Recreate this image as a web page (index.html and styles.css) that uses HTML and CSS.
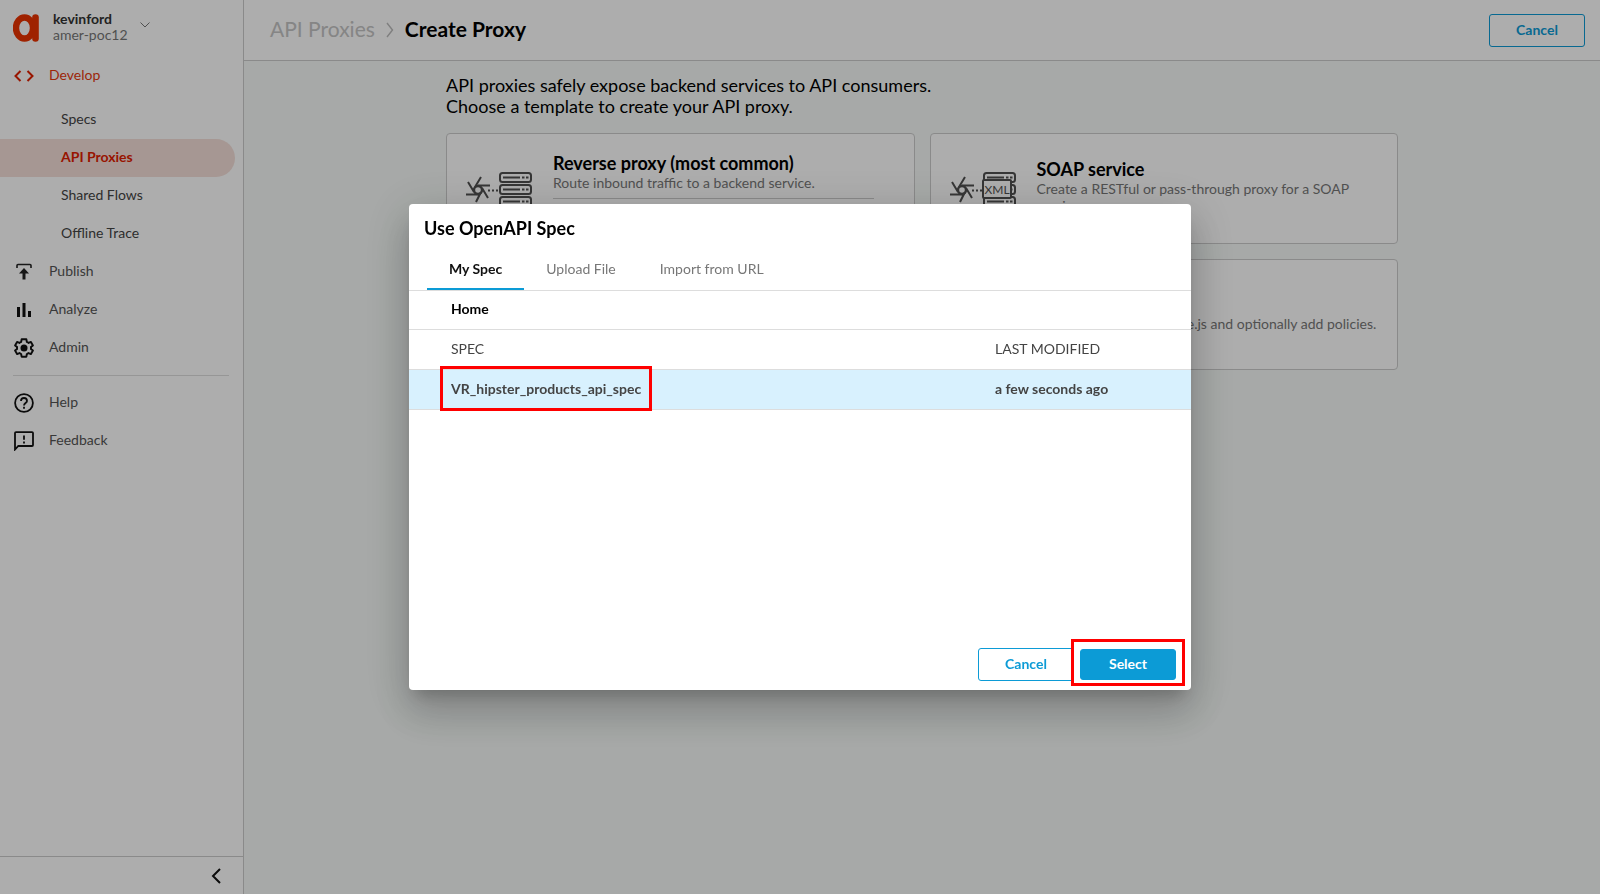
FILE: index.html
```html
<!DOCTYPE html>
<html lang="en">
<head>
<meta charset="utf-8">
<title>Create Proxy</title>
<link rel="stylesheet" href="styles.css">
</head>
<body>
<svg class="defs" aria-hidden="true">
  <defs>
    <g id="pinwheel" fill="none" stroke="#505050" stroke-width="2">
      <circle cx="12" cy="18" r="4" stroke-width="2.4"/>
      <path d="M9 15L15 5M12 13.500H24M16 16L22 26M15 20L10 30M13 22.500H0M8 20L2 10"/>
      <path d="M22 18.500H32" stroke-dasharray="2 2" stroke-dashoffset="0"/>
    </g>
    <g id="server">
      <rect x="34" y="1" width="31" height="9" rx="2.500" fill="none" stroke="#505050" stroke-width="2"/>
      <path d="M37 5.500H54M56 5.500H58.500M60 5.500H62.500" stroke="#505050" stroke-width="2"/>
    </g>
  </defs>
</svg>
<div class="app">
  <aside class="sidebar">
    <button class="account" type="button">
      <svg class="logo" width="26" height="28" viewBox="0 0 26 28" fill="none" stroke="#eb3300" aria-hidden="true">
        <ellipse cx="11.500" cy="14" rx="8.500" ry="10.500" stroke-width="6.400"/>
        <path d="M22.500 3.500V24.500" stroke-width="6.600" stroke-linecap="round"/>
      </svg>
      <span class="account-text"><strong>kevinford</strong><span>amer-poc12</span></span>
      <svg class="caret" width="10" height="6" viewBox="0 0 10 6" fill="none" stroke="#777" aria-hidden="true"><path d="M.500.500L5 5L9.500.500"/></svg>
    </button>
    <nav class="nav">
      <a class="item current" href="#"><svg width="20" height="20" viewBox="0 0 20 20" fill="none" stroke="#e02000" stroke-width="2" aria-hidden="true"><path d="M6.500 5L1.500 10L6.500 15M13.500 5L18.500 10L13.500 15"/></svg>Develop</a>
      <div class="sub">
        <a class="subitem" href="#">Specs</a>
        <a class="subitem active" href="#">API Proxies</a>
        <a class="subitem" href="#">Shared Flows</a>
        <a class="subitem" href="#">Offline Trace</a>
      </div>
      <a class="item" href="#"><svg width="20" height="20" viewBox="0 0 20 20" fill="none" stroke="#222" aria-hidden="true"><path d="M3 6V3.500Q3 2.500 4 2.500H16Q17 2.500 17 3.500V6" stroke-width="1.600"/><path d="M10 17.500V9" stroke-width="3"/><path d="M5 11.500L10 6L15 11.500Z" fill="#222" stroke="none"/></svg>Publish</a>
      <a class="item" href="#"><svg width="20" height="20" viewBox="0 0 20 20" fill="#111" aria-hidden="true"><path d="M3 7H6V17H3zM8.500 3H11.500V17H8.500zM14 11H17V17H14z"/></svg>Analyze</a>
      <a class="item" href="#"><svg width="20" height="20" viewBox="2.500 2 20 20" aria-hidden="true"><path fill="none" stroke="#111" stroke-width="1.900" stroke-linejoin="round" d="M19.430 12.980c.040-.320.070-.640.070-.980s-.030-.660-.070-.980l2-1.600-2-3.460-2.400 1c-.520-.400-1.080-.730-1.690-.980L14.900 3.300h-4.800l-.440 2.680c-.610.250-1.170.590-1.690.980l-2.400-1-2 3.460 2 1.600c-.040.320-.070.650-.070.980s.030.660.070.980l-2 1.600 2 3.460 2.400-1c.520.400 1.080.730 1.690.980l.440 2.660h4.800l.440-2.660c.610-.250 1.170-.590 1.690-.980l2.400 1 2-3.460z"/><circle cx="12.500" cy="12" r="3.500" fill="#111"/></svg>Admin</a>
      <hr class="rule">
      <a class="item" href="#"><svg width="20" height="20" viewBox="0 0 20 20" fill="none" stroke="#111" stroke-width="1.800" aria-hidden="true"><circle cx="10" cy="10" r="8.900"/><path d="M7 8C7 4 13 4 13 8C13 10 10 10.200 10 12.500M10 13.800V15.800"/></svg>Help</a>
      <a class="item" href="#"><svg width="20" height="20" viewBox="0 0 20 20" fill="none" stroke="#111" stroke-width="1.800" aria-hidden="true"><path d="M1 18.500V2Q1 1.200 2 1.200H18Q19 1.200 19 2V14Q19 15 18 15H4.300Z"/><path d="M10 4.500V8.800M10 10.500V12.500"/></svg>Feedback</a>
    </nav>
    <div class="collapse">
      <button type="button" aria-label="Collapse menu"><svg width="10" height="16" viewBox="0 0 10 16" fill="none" stroke="#111" stroke-width="2"><path d="M9 1L2 8L9 15"/></svg></button>
    </div>
  </aside>
  <div class="page">
    <header class="topbar">
      <a class="crumb" href="#">API Proxies</a>
      <svg class="sep" width="8" height="16" viewBox="0 0 8 16" fill="none" stroke="#bbb" stroke-width="1.400" aria-hidden="true"><path d="M1 1L6.500 8L1 15"/></svg>
      <h1>Create Proxy</h1>
      <button class="btn outline" type="button">Cancel</button>
    </header>
    <main class="content">
      <p class="intro">API proxies safely expose backend services to API consumers.<br>Choose a template to create your API proxy.</p>
      <div class="cards">
        <article class="card">
          <svg width="66" height="36" viewBox="0 0 66 36" aria-hidden="true"><use href="#pinwheel"/><use href="#server"/><use href="#server" y="12"/><use href="#server" y="24"/></svg>
          <div class="card-text">
            <h2>Reverse proxy (most common)</h2>
            <p>Route inbound traffic to a backend service.</p>
            <div class="card-action"><button class="link" type="button">Use OpenAPI</button></div>
          </div>
        </article>
        <article class="card">
          <svg width="66" height="36" viewBox="0 0 66 36" aria-hidden="true"><use href="#pinwheel"/><use href="#server"/><use href="#server" y="12"/><use href="#server" y="24"/><rect x="33" y="8" width="28" height="18" rx="1" fill="#fff" stroke="#505050" stroke-width="2"/><text class="glyph" x="47" y="22" text-anchor="middle">XML</text></svg>
          <div class="card-text">
            <h2>SOAP service</h2>
            <p>Create a RESTful or pass-through proxy for a SOAP service.</p>
          </div>
        </article>
        <article class="card">
          <svg width="66" height="36" viewBox="0 0 66 36" aria-hidden="true"><use href="#pinwheel"/></svg>
          <div class="card-text">
            <h2>No target</h2>
            <p>Create a simple proxy with no target.</p>
          </div>
        </article>
        <article class="card">
          <svg width="66" height="36" viewBox="0 0 66 36" aria-hidden="true"><use href="#pinwheel"/></svg>
          <div class="card-text">
            <h2>Hosted target</h2>
            <p>Proxy to the hosted Node.js and optionally add policies.</p>
          </div>
        </article>
      </div>
    </main>
  </div>
</div>

<div class="backdrop">
  <section class="dialog" role="dialog" aria-modal="true" aria-labelledby="dialog-title">
    <h2 id="dialog-title">Use OpenAPI Spec</h2>
    <div class="tabs" role="tablist">
      <button class="tab selected" type="button" role="tab" aria-selected="true">My Spec</button>
      <button class="tab" type="button" role="tab" aria-selected="false">Upload File</button>
      <button class="tab" type="button" role="tab" aria-selected="false">Import from URL</button>
    </div>
    <div class="path">Home</div>
    <div class="list">
      <table>
        <thead><tr><th scope="col">SPEC</th><th scope="col">LAST MODIFIED</th></tr></thead>
        <tbody><tr><td><span class="marked name">VR_hipster_products_api_spec</span></td><td>a few seconds ago</td></tr></tbody>
      </table>
    </div>
    <footer class="actions">
      <button class="btn outline" type="button">Cancel</button>
      <span class="marked select"><button class="btn solid" type="button">Select</button></span>
    </footer>
  </section>
</div>
</body>
</html>
```

FILE: styles.css
```css
* { box-sizing: border-box; }
body {
  margin: 0;
  font-family: Lato, "Open Sans", sans-serif;
  font-size: 14px;
  color: #000;
}
button { font: inherit; cursor: pointer; }
a { text-decoration: none; color: inherit; }
h1, h2, p { margin: 0; }
.defs { position: absolute; width: 0; height: 0; }

.app { display: flex; min-height: 100vh; background: #f6faf8; }

/* Sidebar */
.sidebar {
  display: flex;
  flex-direction: column;
  flex: 0 0 244px;
  background: #fff;
  border-right: 1px solid #ccc;
}
.account {
  display: flex;
  align-items: center;
  height: 57px;
  padding: 0 13px 3px;
  border: 0;
  background: none;
  text-align: left;
}
.logo { margin-top: 2px; }
.account-text {
  display: flex;
  flex-direction: column;
  margin: 0 12px 0 14px;
  line-height: 16px;
  color: #777;
}
.account-text strong { color: #333; }
.caret { margin-bottom: 4px; }
.nav { display: flex; flex-direction: column; flex: 1; }
.item {
  display: flex;
  align-items: center;
  gap: 15px;
  height: 38px;
  padding: 0 0 4px 14px;
  color: #555;
}
.item svg { margin-top: 4px; }
.item.current { color: #e8380d; }
.sub { margin-top: 6px; }
.subitem {
  display: flex;
  align-items: center;
  height: 38px;
  margin-right: 8px;
  padding: 0 0 4px 61px;
  color: #444;
}
.subitem.active {
  border-radius: 0 19px 19px 0;
  background: #f5dfd9;
  color: #e02000;
  font-weight: 700;
}
.rule {
  width: 216px;
  margin: 8px 0 8px 13px;
  border: 0;
  border-top: 1px solid #ddd;
}
.collapse {
  display: flex;
  justify-content: flex-end;
  align-items: center;
  height: 38px;
  padding-right: 16px;
  border-top: 1px solid #ccc;
}
.collapse button { display: flex; border: 0; background: none; }

/* Page */
.page { flex: 1; min-width: 0; }
.topbar {
  display: flex;
  align-items: center;
  height: 61px;
  padding: 0 15px 0 26px;
  background: #fff;
  border-bottom: 1px solid #ccc;
}
.crumb { padding-bottom: 3px; font-size: 21px; color: #c4c4c4; }
.sep { margin: 0 11px; }
.topbar h1 { padding-bottom: 3px; font-size: 21px; font-weight: 700; }
.topbar .btn { margin-left: auto; }
.content { max-width: 952px; margin: 0 auto; padding-top: 14px; }
.intro { font-size: 18px; line-height: 21px; }
.cards {
  display: grid;
  grid-template-columns: 1fr 1fr;
  gap: 15px;
  margin-top: 16px;
}
.card {
  display: flex;
  align-items: center;
  gap: 20px;
  height: 111px;
  padding: 0 20px 0 19px;
  border: 1px solid #ccc;
  border-radius: 4px;
  background: #fff;
}
.card svg { flex: none; margin-top: 2px; }
.card-text { flex: 1; padding: 0 0 5px 1px; }
.card h2 { font-size: 18px; line-height: 22px; font-weight: 700; }
.card p { font-size: 14px; line-height: 17px; color: #777; }
.card-action { margin: 7px 20px 0 0; padding-top: 4px; border-top: 1px solid #ccc; }
.link { padding: 0; border: 0; background: none; color: #0c9bd6; line-height: 16px; }
.glyph { font-size: 12px; fill: #505050; }

.btn {
  width: 96px;
  height: 33px;
  padding: 0 0 2px;
  border: 1px solid #0c9bd6;
  border-radius: 3px;
  font-size: 14px;
  font-weight: 700;
}
.outline { background: #fff; color: #0c9bd6; }
.solid { height: 31px; background: #0c9bd6; color: #fff; }

/* Dialog */
.backdrop {
  position: fixed;
  inset: 0;
  display: flex;
  align-items: center;
  justify-content: center;
  background: rgba(0, 0, 0, .32);
}
.dialog {
  display: flex;
  flex-direction: column;
  width: 782px;
  max-width: 95vw;
  border-radius: 4px;
  background: #fff;
  box-shadow: 0 11px 15px -7px rgba(0, 0, 0, .2), 0 24px 38px 3px rgba(0, 0, 0, .14), 0 9px 46px 8px rgba(0, 0, 0, .12);
}
.dialog h2 { padding: 12px 15px; font-size: 18px; line-height: 24px; font-weight: 700; }
.tabs { display: flex; padding: 0 18px; border-bottom: 1px solid #ddd; }
.tab {
  height: 38px;
  padding: 0 22px 4px;
  border: 0;
  border-bottom: 2px solid transparent;
  background: none;
  color: #777;
}
.tab.selected { border-color: #0c9bd6; color: #111; font-weight: 700; }
.path {
  padding: 0 42px 2px;
  line-height: 36px;
  border-bottom: 1px solid #ddd;
  font-weight: 700;
}
.list { min-height: 318px; }
table { width: 100%; border-collapse: collapse; table-layout: fixed; }
th, td {
  height: 39px;
  padding: 0 0 2px 42px;
  border-bottom: 1px solid #ddd;
  text-align: left;
  font-weight: 400;
  color: #444;
}
th:last-child { width: 238px; }
td { height: 40px; background: #d8f1fe; font-weight: 700; }
.actions {
  display: flex;
  justify-content: flex-end;
  align-items: center;
  gap: 6px;
  padding: 0 15px 9px;
}

/* Red callout frames */
.marked { position: relative; }
.marked::after {
  content: "";
  position: absolute;
  border: 3px solid #f00;
  pointer-events: none;
}
.name::after { inset: -14px -11px; }
.select::after { inset: -10px -9px -6px; }
```
